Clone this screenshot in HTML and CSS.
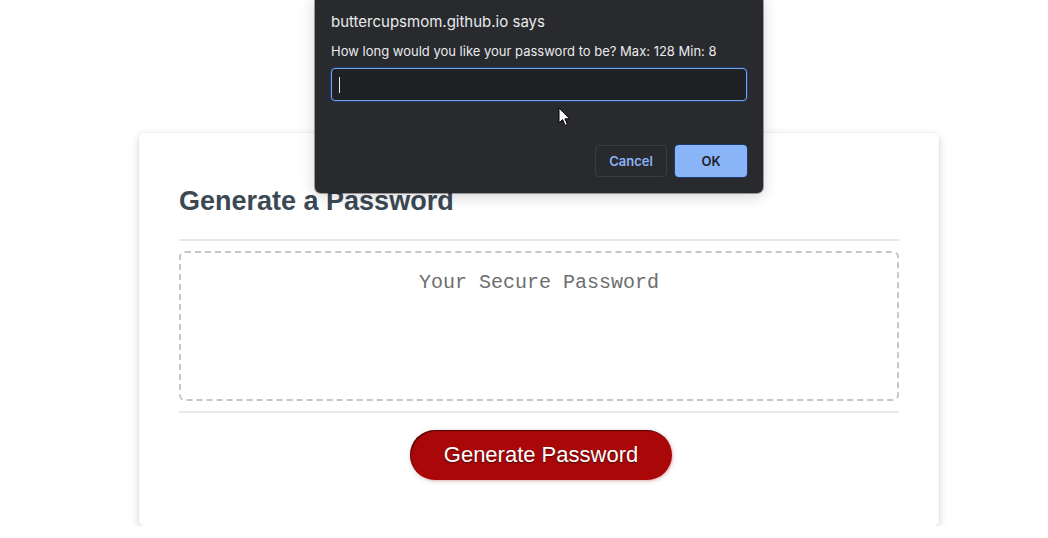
FILE: index.html
```html
<!DOCTYPE html>
<html lang="en">
<head>
<meta charset="utf-8">
<title>Password Generator</title>
<link rel="stylesheet" href="styles.css">
</head>
<body>
<div class="wrapper">
  <div class="card">
    <div class="card-header">
      <h2>Generate a Password</h2>
    </div>
    <div class="card-body">
      <textarea readonly placeholder="Your Secure Password" aria-label="Generated Password"></textarea>
    </div>
    <div class="card-footer">
      <button class="btn" type="button">Generate Password</button>
    </div>
  </div>
</div>

<div class="dialog" role="dialog">
  <div class="dialog-title">buttercupsmom.github.io says</div>
  <div class="dialog-message">How long would you like your password to be? Max: 128 Min: 8</div>
  <div class="dialog-input"><span class="caret"></span></div>
  <div class="dialog-actions">
    <button class="dbtn dbtn-cancel" type="button">Cancel</button>
    <button class="dbtn dbtn-ok" type="button">OK</button>
  </div>
</div>

<svg class="pointer" width="14" height="20" viewBox="0 0 14 20" aria-hidden="true">
  <path d="M1 1 L1 16 L4.6 12.6 L7.2 18.4 L9.4 17.4 L6.9 11.8 L11.6 11.8 Z" fill="#fff" stroke="#000" stroke-width="1" stroke-linejoin="round"/>
</svg>
</body>
</html>
```
FILE: styles.css
```css
* { box-sizing: border-box; }

html, body {
  margin: 0;
  padding: 0;
  background: #ffffff;
  font-family: "Liberation Sans", Arial, sans-serif;
}

.wrapper {
  padding: 133px 0 0 30px;
}

.card {
  width: 800px;
  margin: 0 auto;
  padding: 30px 40px;
  background: #ffffff;
  border-radius: 5px;
  box-shadow: 0 0 0 1px rgba(0, 0, 0, 0.03), 0 3px 10px rgba(0, 0, 0, 0.16);
  color: hsl(206, 17%, 28%);
  font-size: 18px;
}

.card-header h2 {
  margin: 23px 0 22px;
  font-size: 27px;
  font-weight: bold;
  line-height: 31px;
}

.card-header::after,
.card-footer::before {
  content: "";
  display: block;
  height: 2px;
  background: #e6e8ea;
}

.card-body textarea {
  display: block;
  width: 100%;
  height: 150px;
  margin: 10px 0;
  padding: 18px 20px;
  border: 2px dashed #c6c6c6;
  border-radius: 6px;
  resize: none;
  outline: none;
  text-align: center;
  font-family: "Liberation Mono", "Courier New", monospace;
  font-size: 20px;
  color: #5a5a5a;
  background: #fff;
}

.card-body textarea::placeholder {
  color: #6e6e6e;
  opacity: 1;
}

.card-footer {
  text-align: center;
}

.btn {
  display: inline-block;
  margin: 17px 16px 16px 20px;
  padding: 14px 34px;
  border: none;
  border-radius: 25px;
  background: hsl(360, 91%, 35%);
  color: #ffffff;
  font-family: "Liberation Sans", Arial, sans-serif;
  font-size: 22px;
  line-height: 22px;
  text-shadow: 0 1px 2px rgba(0, 0, 0, 0.55);
  box-shadow: inset 1px 1px 1px rgba(0, 0, 0, 0.55), 1px 1px 3px rgba(200, 0, 0, 0.25), 0 1px 6px rgba(0, 0, 0, 0.1);
}

/* Browser prompt overlay */
.dialog {
  position: absolute;
  top: -6px;
  left: 315px;
  width: 448px;
  padding: 18px 16px 16px;
  background: #292a2d;
  border-radius: 6px;
  box-shadow: 0 0 0 1px rgba(0, 0, 0, 0.35), 0 4px 14px rgba(0, 0, 0, 0.12), 0 0 24px rgba(0, 0, 0, 0.06);
  font-family: Inter, "Liberation Sans", sans-serif;
  color: #e8eaed;
}

.dialog-title {
  font-size: 15px;
  line-height: 20px;
}

.dialog-message {
  margin-top: 11px;
  font-size: 13px;
  line-height: 16px;
}

.dialog-input {
  margin-top: 9px;
  height: 33px;
  border: 1px solid #7da3e6;
  border-radius: 4px;
  background: #1f2023;
  box-shadow: 0 0 0 1px #1b3a70;
  display: flex;
  align-items: center;
  padding-left: 7px;
}

.caret {
  display: block;
  width: 1px;
  height: 16px;
  background: #e8eaed;
}

.dialog-actions {
  margin-top: 44px;
  display: flex;
  justify-content: flex-end;
  gap: 8px;
}

.dbtn {
  width: 72px;
  height: 32px;
  border-radius: 4px;
  font-family: Inter, "Liberation Sans", sans-serif;
  font-size: 13px;
  font-weight: 600;
  padding: 0;
}

.dbtn-cancel {
  background: transparent;
  border: 1px solid #3a3c40;
  color: #8ab4f8;
}

.dbtn-ok {
  background: #8ab4f8;
  border: none;
  color: #202124;
  box-shadow: 0 0 0 1px #1b3a70;
}

.pointer {
  position: absolute;
  top: 107px;
  left: 558px;
}
```
